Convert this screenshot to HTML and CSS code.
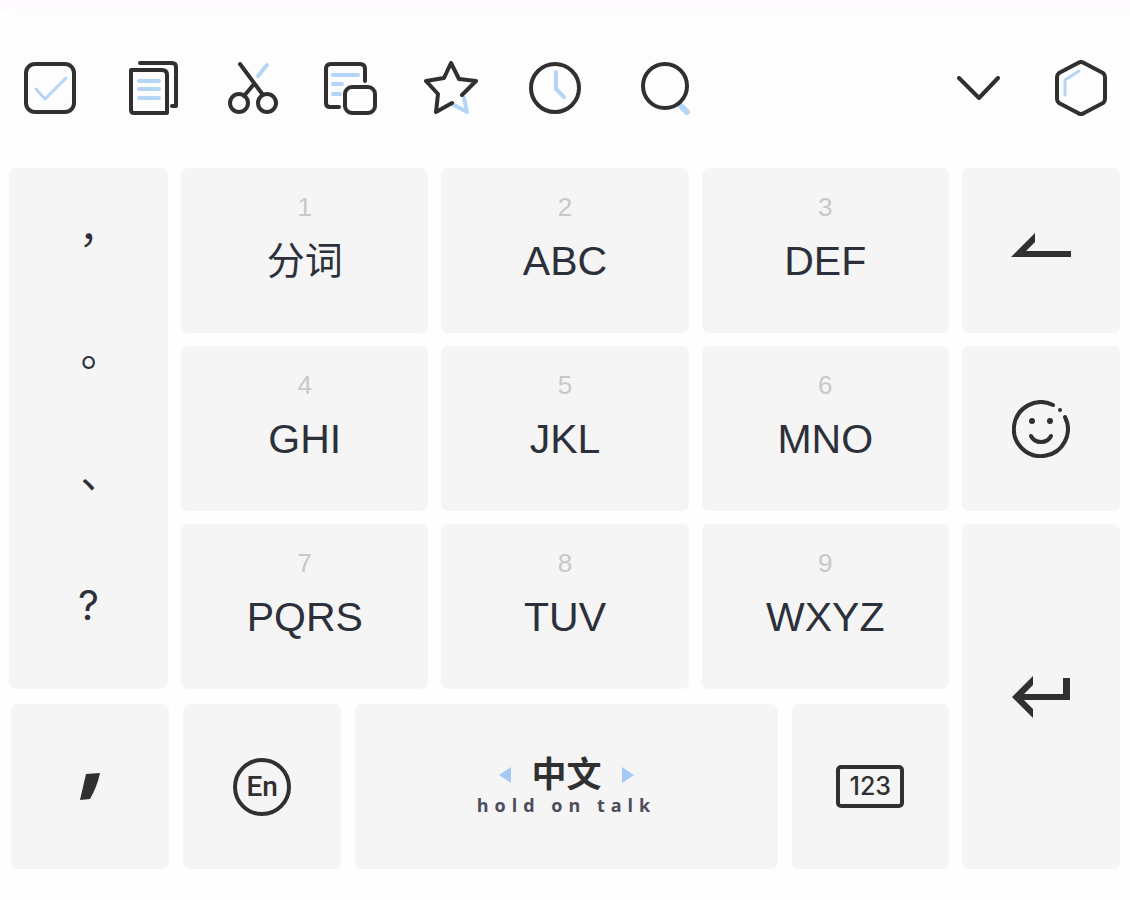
FILE: index.html
```
<!DOCTYPE html>
<html lang="zh">
<head>
  <meta charset="UTF-8">
  <meta name="viewport" content="width=device-width, initial-scale=1.0">
  <title>Keyboard</title>
  <link rel="stylesheet" href="styles.css">
</head>
<body>
  <div class="toolbar">
    <button type="button" aria-label="Select all">
      <svg width="52" height="52" viewBox="0 0 52 52">
        <rect x="2" y="2" width="48" height="48" rx="9"/>
        <path class="blue thin" d="M12 27l9 10 21-21"/>
      </svg>
    </button>
    <button type="button" aria-label="Copy">
      <svg width="50" height="54" viewBox="0 0 50 54">
        <path d="M3 9h31q5 0 5 5v38H6q-3 0-3-3z"/>
        <path d="M12 2h32q4 0 4 4v39h-4"/>
        <path class="blue" d="M11 20h20M11 28h20M11 37h20"/>
      </svg>
    </button>
    <button type="button" aria-label="Cut">
      <svg width="52" height="54" viewBox="0 0 52 54">
        <circle cx="12" cy="42" r="9"/>
        <circle cx="40" cy="42" r="9"/>
        <path d="M13 3l23 31M27 23l-10 12"/>
        <path class="blue" d="M31 15l9-11"/>
      </svg>
    </button>
    <button type="button" aria-label="Paste">
      <svg width="53" height="54" viewBox="0 0 53 54">
        <path d="M41 20V8q0-5-5-5H7Q2 3 2 8v34q0 4 4 4h9"/>
        <rect x="21" y="26" width="30" height="26" rx="7"/>
        <path class="blue" d="M9 14h25M9 23h9M9 33h7"/>
      </svg>
    </button>
    <button type="button" aria-label="Favorites">
      <svg width="54" height="54" viewBox="0 0 54 54">
        <path class="blue" d="M40 37l3 14-15-8"/>
        <path d="M28 42L12 51l2-18L2 20l18-3 7-15 8 16 17 2-14 14"/>
      </svg>
    </button>
    <button type="button" aria-label="History">
      <svg width="52" height="52" viewBox="0 0 52 52">
        <circle cx="26" cy="26" r="24"/>
        <path class="blue" d="M27 10v17l8 8"/>
      </svg>
    </button>
    <button type="button" aria-label="Search">
      <svg width="51" height="54" viewBox="0 0 51 54">
        <path class="blue handle" d="M41 45l6 6"/>
        <circle cx="25" cy="25" r="22"/>
      </svg>
    </button>
    <button type="button" aria-label="Hide keyboard">
      <svg width="43" height="24" viewBox="0 0 43 24">
        <path d="M2 2l20 20L41 2"/>
      </svg>
    </button>
    <button type="button" aria-label="Menu">
      <svg width="54" height="56" viewBox="0 0 54 56">
        <path d="M24 3q3-2 6 0l19 10q2 2 2 4v22q0 2-2 4L30 53q-3 2-6 0L5 43q-2-2-2-4V17q0-2 2-4z"/>
        <path class="blue thin" d="M11 35V20l14-9"/>
      </svg>
    </button>
  </div>

  <div class="keyboard">
    <div class="punct">
      <button type="button">，</button>
      <button type="button">。</button>
      <button type="button">、</button>
      <button type="button">?</button>
    </div>

    <button type="button" class="key"><small>1</small><span class="hanzi">分词</span></button>
    <button type="button" class="key"><small>2</small><span>ABC</span></button>
    <button type="button" class="key"><small>3</small><span>DEF</span></button>
    <button type="button" class="key icon-key" aria-label="Backspace">
      <svg class="solid" width="60" height="36" viewBox="0 0 60 36">
        <path d="M0 24L24 0v9L15 18h45v6z"/>
      </svg>
    </button>

    <button type="button" class="key"><small>4</small><span>GHI</span></button>
    <button type="button" class="key"><small>5</small><span>JKL</span></button>
    <button type="button" class="key"><small>6</small><span>MNO</span></button>
    <button type="button" class="key icon-key" aria-label="Emoji">
      <svg width="58" height="58" viewBox="0 0 58 58">
        <path d="M41 5A27 27 0 1 0 53 17"/>
        <path d="M19 36c4 8 16 8 20 0"/>
        <g class="dots">
          <circle cx="20" cy="21" r="3"/>
          <circle cx="38" cy="21" r="3"/>
          <circle cx="48" cy="10" r="2"/>
        </g>
      </svg>
    </button>

    <button type="button" class="key"><small>7</small><span>PQRS</span></button>
    <button type="button" class="key"><small>8</small><span>TUV</span></button>
    <button type="button" class="key"><small>9</small><span>WXYZ</span></button>
    <button type="button" class="key icon-key enter" aria-label="Enter">
      <svg class="solid" width="58" height="42" viewBox="0 0 58 42">
        <path d="M0 21L21 0v9L12 18h39V2h7v22H12l9 9v9z"/>
      </svg>
    </button>

    <div class="bottom-row">
      <button type="button" class="key icon-key" aria-label="Separator">
        <svg class="solid" width="20" height="28" viewBox="0 0 20 28">
          <path d="M6 1l14-1q-3 14-10 26L0 27z"/>
        </svg>
      </button>
      <button type="button" class="key icon-key"><span class="lang">En</span></button>
      <button type="button" class="key icon-key space">
        <span class="space-lang">
          <svg class="arrow" width="12" height="16" viewBox="0 0 12 16"><path d="M12 0v16L0 8z"/></svg>
          中文
          <svg class="arrow" width="12" height="16" viewBox="0 0 12 16"><path d="M0 0v16l12-8z"/></svg>
        </span>
        <span class="hint">hold on talk</span>
      </button>
      <button type="button" class="key icon-key"><span class="num">123</span></button>
    </div>
  </div>
</body>
</html>
```
FILE: styles.css
```
body {
  margin: 0;
  border-top: 12px solid #fdfbfe;
  background: #fefefe;
  color: #2c303a;
  font-family: "Liberation Sans", "Noto Sans CJK SC", sans-serif;
}

button {
  padding: 0;
  border: none;
  background: none;
  color: inherit;
  font: inherit;
  cursor: pointer;
}

svg {
  display: block;
  fill: none;
  stroke: #303030;
  stroke-width: 4;
  stroke-linecap: round;
  stroke-linejoin: round;
}

.blue {
  stroke: #b4d5f5;
}

.thin {
  stroke-width: 3;
}

.handle {
  stroke-width: 6;
}

.solid,
.dots {
  fill: #303030;
  stroke: none;
}

/* Toolbar */
.toolbar {
  display: grid;
  grid-template-columns: 104px 99px 97px 100px 105px 111px 1fr 97px 54px;
  align-items: center;
  justify-items: start;
  height: 136px;
  margin-left: 12px;
  padding: 16px 22px 0 12px;
  box-sizing: border-box;
  background: #fdfdfd;
}

/* Keys */
.keyboard {
  display: grid;
  grid-template-columns: 159fr 247fr 247fr 247fr 158fr;
  grid-template-rows: repeat(3, minmax(165px, auto)) minmax(167px, auto);
  gap: 13px;
  padding: 20px 10px 30px 9px;
}

.key,
.punct {
  background: #f5f5f5;
  border-radius: 7px;
}

.key {
  display: flex;
  flex-direction: column;
  align-items: center;
  gap: 12px;
  padding-top: 23px;
  font-size: 41px;
  line-height: 52px;
}

.key small {
  color: #c8c8c8;
  font-size: 26px;
  line-height: 32px;
}

.hanzi {
  font-size: 38px;
}

.icon-key {
  justify-content: center;
  padding-top: 0;
}

.enter {
  grid-row: 3 / 5;
  grid-column: 5;
}

.punct {
  grid-row: 1 / 4;
  display: flex;
  flex-direction: column;
  padding: 8px 0 23px;
  font-family: Inter, "Noto Sans CJK TC", sans-serif;
  font-size: 41px;
}

.punct button {
  flex: 1;
}

/* Bottom row */
.bottom-row {
  grid-column: 1 / 5;
  display: grid;
  grid-template-columns: 158fr 158fr 422fr 157fr;
  gap: 14px;
  padding: 2px 0 0 2px;
}

.lang {
  width: 50px;
  border: 4px solid #303030;
  border-radius: 50%;
  color: #303030;
  font-family: Roboto, sans-serif;
  font-size: 28px;
  font-weight: 500;
  line-height: 50px;
}

.num {
  width: 60px;
  border: 4px solid #303030;
  border-radius: 5px;
  color: #303030;
  font-family: Inter, sans-serif;
  font-size: 25px;
  font-weight: 500;
  line-height: 35px;
}

.space {
  gap: 0;
}

.space-lang {
  display: flex;
  align-items: center;
  gap: 20px;
  color: #303030;
  font-size: 35px;
  font-weight: 700;
  line-height: 36px;
}

.arrow {
  fill: #a3c9f5;
  stroke: none;
}

.hint {
  color: #4c4c5c;
  font-family: "Open Sans", sans-serif;
  font-size: 18px;
  font-weight: 700;
  letter-spacing: 6px;
  line-height: 24px;
}
```
